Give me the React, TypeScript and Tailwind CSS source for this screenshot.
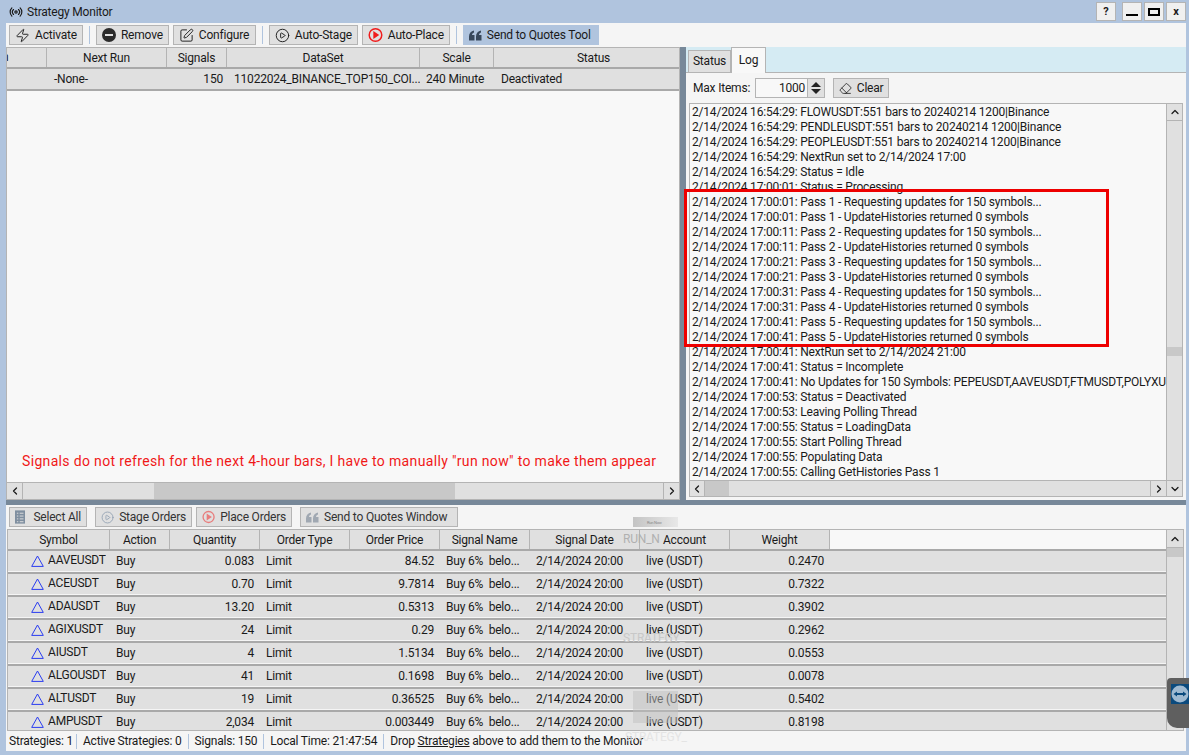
import { ChevronDown, ChevronLeft, ChevronRight, ChevronUp, CirclePlay, Eraser, Radio, SquarePen, Zap } from "lucide-react";
import type { ReactNode } from "react";

const logLines = [
  "2/14/2024 16:54:29: FLOWUSDT:551 bars to 20240214 1200|Binance",
  "2/14/2024 16:54:29: PENDLEUSDT:551 bars to 20240214 1200|Binance",
  "2/14/2024 16:54:29: PEOPLEUSDT:551 bars to 20240214 1200|Binance",
  "2/14/2024 16:54:29: NextRun set to 2/14/2024 17:00",
  "2/14/2024 16:54:29: Status = Idle",
  "2/14/2024 17:00:01: Status = Processing",
  "2/14/2024 17:00:01: Pass 1 - Requesting updates for 150 symbols...",
  "2/14/2024 17:00:01: Pass 1 - UpdateHistories returned 0 symbols",
  "2/14/2024 17:00:11: Pass 2 - Requesting updates for 150 symbols...",
  "2/14/2024 17:00:11: Pass 2 - UpdateHistories returned 0 symbols",
  "2/14/2024 17:00:21: Pass 3 - Requesting updates for 150 symbols...",
  "2/14/2024 17:00:21: Pass 3 - UpdateHistories returned 0 symbols",
  "2/14/2024 17:00:31: Pass 4 - Requesting updates for 150 symbols...",
  "2/14/2024 17:00:31: Pass 4 - UpdateHistories returned 0 symbols",
  "2/14/2024 17:00:41: Pass 5 - Requesting updates for 150 symbols...",
  "2/14/2024 17:00:41: Pass 5 - UpdateHistories returned 0 symbols",
  "2/14/2024 17:00:41: NextRun set to 2/14/2024 21:00",
  "2/14/2024 17:00:41: Status = Incomplete",
  "2/14/2024 17:00:41: No Updates for 150 Symbols: PEPEUSDT,AAVEUSDT,FTMUSDT,POLYXUSDT,ARUSDT",
  "2/14/2024 17:00:53: Status = Deactivated",
  "2/14/2024 17:00:53: Leaving Polling Thread",
  "2/14/2024 17:00:55: Status = LoadingData",
  "2/14/2024 17:00:55: Start Polling Thread",
  "2/14/2024 17:00:55: Populating Data",
  "2/14/2024 17:00:55: Calling GetHistories Pass 1",
];

const orders = [
  ["AAVEUSDT", "0.083", "84.52", "0.2470"],
  ["ACEUSDT", "0.70", "9.7814", "0.7322"],
  ["ADAUSDT", "13.20", "0.5313", "0.3902"],
  ["AGIXUSDT", "24", "0.29", "0.2962"],
  ["AIUSDT", "4", "1.5134", "0.0553"],
  ["ALGOUSDT", "41", "0.1698", "0.0078"],
  ["ALTUSDT", "19", "0.36525", "0.5402"],
  ["AMPUSDT", "2,034", "0.003449", "0.8198"],
];

function Btn({ icon, label, active, dim, className }: { icon: ReactNode; label: string; active?: boolean; dim?: boolean; className?: string }) {
  return (
    <div className={`flex h-[20px] shrink-0 items-center gap-[5px] whitespace-nowrap border px-[5px] ${active ? "border-[#b0c4de] bg-[#b0c4de]" : "border-[#b4b4b4] bg-[#e0e0e0]"} ${dim ? "text-[#333]" : ""} ${className ?? ""}`}>
      {icon}
      <span className="pt-[1px]">{label}</span>
    </div>
  );
}

function Sep() {
  return <div className="mx-[2px] h-[18px] w-[1px] bg-[#b0c4de]" />;
}

function Quote({ color }: { color: string }) {
  return (
    <svg width="13" height="11" viewBox="0 0 13 11" fill={color}>
      <path d="M0 6.5C0 3 2 1 5 .5V2.5C3.800 3 3 3.800 3 5H5.500V10.500H0ZM7 6.500C7 3 9 1 12 .5V2.500C10.800 3 10 3.800 10 5H12.500V10.500H7Z" />
    </svg>
  );
}

function RedPlay({ dim }: { dim?: boolean }) {
  return (
    <svg width="16" height="16" viewBox="0 0 16 16" className={dim ? "opacity-50" : ""}>
      <circle cx="8" cy="8" r="6.700" fill="none" stroke="#f01c1c" strokeWidth="1.600" />
      <path d="M5.700 3.800 12 8 5.700 12.200Z" fill="#f01c1c" />
    </svg>
  );
}

function HeaderCell({ w, label }: { w: string; label: string }) {
  return <div className={`${w} flex h-full shrink-0 items-center justify-center border-r border-[#b4b4b4] pt-[1px]`}>{label}</div>;
}

function ScrollBtn({ children, className }: { children: ReactNode; className: string }) {
  return <div className={`flex shrink-0 items-center justify-center bg-[#e0e0e0] ${className}`}>{children}</div>;
}

function OrderRow({ o }: { o: string[] }) {
  return (
    <div className="flex h-[23px] items-center border-t-2 border-b border-t-[#a9a9a9] border-b-[#f5f5f5] bg-[#e0e0e0] pt-[1px]">
      <div className="flex w-[102px] shrink-0 items-center pl-[23px]">
        <svg width="13" height="12" viewBox="0 0 13 12" className="-mt-[1px] shrink-0">
          <path d="M6.500 1 12.300 11.400H.7Z" fill="none" stroke="#2a3cf0" strokeWidth="1" />
        </svg>
        <span className="ml-[4px] -mt-[2px] w-[58px] shrink-0 overflow-hidden whitespace-nowrap">{o[0]}</span>
      </div>
      <div className="w-[60px] shrink-0 pl-[6px]">Buy</div>
      <div className="w-[90px] shrink-0 pr-[6px] text-right">{o[1]}</div>
      <div className="w-[90px] shrink-0 pl-[6px]">Limit</div>
      <div className="w-[90px] shrink-0 pr-[6px] text-right">{o[2]}</div>
      <div className="w-[90px] shrink-0 whitespace-pre pl-[6px]">Buy 6%  belo...</div>
      <div className="w-[110px] shrink-0 pl-[6px]">2/14/2024 20:00</div>
      <div className="w-[90px] shrink-0 pl-[6px]">live (USDT)</div>
      <div className="w-[100px] shrink-0 pr-[6px] text-right">{o[3]}</div>
    </div>
  );
}

export default function App() {
  return (
    <div className="relative flex h-[755px] w-[1189px] flex-col overflow-hidden bg-[#b0c4de] pb-[4px] pl-[6px] pr-[3px] text-[12px] leading-[15px] tracking-[-0.2px] text-[#1a1a1a] [font-family:Roboto,sans-serif]">
      {/* title bar */}
      <div className="flex h-[23px] shrink-0 items-center">
        <Radio size={14} strokeWidth={2} className="mr-[4px] ml-[3px]" />
        <span className="pt-[1px]">Strategy Monitor</span>
        <div className="ml-auto flex items-center">
          <div className="flex h-[19px] w-[20px] items-center justify-center border border-[#b4b4b4] bg-[#f0f0f0] text-[11px] font-bold">?</div>
          <div className="ml-[6px] flex h-[19px] w-[20px] items-end justify-center border border-[#b4b4b4] bg-[#f0f0f0] pb-[4px]"><div className="h-[2px] w-[12px] bg-black" /></div>
          <div className="ml-[2px] flex h-[19px] w-[20px] items-center justify-center border border-[#b4b4b4] bg-[#f0f0f0]"><div className="h-[8px] w-[12px] border-2 border-black" /></div>
          <div className="ml-[2px] flex h-[19px] w-[20px] items-center justify-center border border-[#b4b4b4] bg-[#f0f0f0] text-[11px] font-bold">x</div>
        </div>
      </div>

      {/* toolbar */}
      <div className="flex h-[24px] shrink-0 items-center gap-[4px] bg-[#f5f5f5] pl-[3px]">
        <Btn icon={<Zap size={15} strokeWidth={1.500} />} label="Activate" />
        <Sep />
        <Btn icon={<svg width="14" height="14" viewBox="0 0 14 14"><circle cx="7" cy="7" r="7" fill="#2b2b2b" /><rect x="3" y="6" width="8" height="2" fill="#e0e0e0" /></svg>} label="Remove" />
        <Btn icon={<SquarePen size={15} strokeWidth={1.500} />} label="Configure" className="w-[83px]" />
        <Sep />
        <Btn icon={<CirclePlay size={15} strokeWidth={1.500} />} label="Auto-Stage" className="w-[89px]" />
        <Btn icon={<RedPlay />} label="Auto-Place" className="w-[88px]" />
        <Sep />
        <Btn icon={<Quote color="#38485c" />} label="Send to Quotes Tool" active className="w-[136px]" />
      </div>

      {/* top panes */}
      <div className="flex h-[453px] shrink-0">
        {/* strategies */}
        <div className="flex w-[674px] shrink-0 flex-col border border-[#b4b4b4] bg-[#f8f8f8]">
          <div className="flex h-[19px] shrink-0 overflow-hidden bg-[#e0e0e0]">
            <div className="flex h-full w-[40px] shrink-0 items-center overflow-hidden border-r border-[#b4b4b4]"><span className="-ml-[5px]">n</span></div>
            <HeaderCell w="w-[120px]" label="Next Run" />
            <HeaderCell w="w-[60px]" label="Signals" />
            <HeaderCell w="w-[193px]" label="DataSet" />
            <HeaderCell w="w-[74px]" label="Scale" />
            <HeaderCell w="w-[200px]" label="Status" />
          </div>
          <div className="flex h-[24px] shrink-0 items-center border-y-2 border-y-[#a9a9a9] bg-[#e0e0e0] pt-[1px]">
            <div className="w-[160px] pl-[47px]">-None-</div>
            <div className="w-[60px] pr-[4px] text-right">150</div>
            <div className="w-[193px] overflow-hidden whitespace-nowrap pl-[7px]">11022024_BINANCE_TOP150_COI...</div>
            <div className="w-[74px] whitespace-nowrap pl-[6px]">240 Minute</div>
            <div className="pl-[7px]">Deactivated</div>
          </div>
          <div className="flex flex-1 items-end pb-[13px] pl-[15px] text-[14px] tracking-[0.34px] text-[#f01818]">
            Signals do not refresh for the next 4-hour bars, I have to manually "run now" to make them appear
          </div>
          <div className="flex h-[17px] shrink-0 border-t border-[#b4b4b4] bg-[#e0e0e0]">
            <ScrollBtn className="w-[16px] border-r border-[#b4b4b4]"><ChevronLeft size={12} strokeWidth={2.500} /></ScrollBtn>
            <div className="ml-[131px] w-[301px] bg-[#c8c8c8]" />
            <ScrollBtn className="ml-auto w-[16px] border-l border-[#b4b4b4]"><ChevronRight size={12} strokeWidth={2.500} /></ScrollBtn>
          </div>
        </div>

        <div className="w-[6px] shrink-0 bg-[#778899]" />

        {/* log pane */}
        <div className="flex w-[500px] shrink-0 flex-col bg-[#d5ebf3]">
          <div className="flex h-[26px] shrink-0 items-end border-b border-[#b4b4b4]">
            <div className="ml-[2px] flex h-[22px] w-[43px] items-center justify-center border border-b-0 border-[#b4b4b4] bg-[#e0e0e0]">Status</div>
            <div className="-mb-[1px] flex h-[26px] w-[35px] items-center justify-center border border-b-0 border-[#b4b4b4] bg-[#f8f8f8]">Log</div>
          </div>
          <div className="flex flex-1 flex-col bg-[#f5f5f5]">
            <div className="flex h-[30px] shrink-0 items-center pl-[7px]">
              <span>Max Items:</span>
              <div className="ml-[5px] flex h-[20px] w-[70px] items-center border border-[#b4b4b4] bg-[#f8f8f8]">
                <span className="flex-1 pr-[2px] text-right">1000</span>
                <div className="flex h-full w-[17px] flex-col items-center justify-center border-l border-[#b4b4b4] bg-[#e0e0e0]">
                  <svg width="10" height="5" viewBox="0 0 10 5"><path d="M5 0 10 5H0Z" fill="#222" /></svg>
                  <svg width="10" height="5" viewBox="0 0 10 5" className="mt-[2px]"><path d="M5 5 0 0H10Z" fill="#222" /></svg>
                </div>
              </div>
              <div className="ml-[8px] flex h-[20px] w-[56px] items-center justify-center gap-[5px] border border-[#b4b4b4] bg-[#e0e0e0]">
                <Eraser size={13} strokeWidth={1.500} />
                <span>Clear</span>
              </div>
            </div>
            <div className="relative ml-[3px] mr-[3px] flex min-h-0 flex-1 flex-col border border-[#b4b4b4] bg-[#f8f8f8]">
              <div className="flex min-h-0 flex-1">
                <div className="min-w-0 flex-1 overflow-hidden whitespace-nowrap pl-[2px] pt-[1px]">
                  {logLines.map((line, i) => (
                    <div key={i} className="h-[15px]">{line}</div>
                  ))}
                </div>
                <div className="flex w-[16px] shrink-0 flex-col border-l border-[#b4b4b4] bg-[#e0e0e0]">
                  <ScrollBtn className="h-[17px] border-b border-[#b4b4b4]"><ChevronUp size={12} strokeWidth={2.500} /></ScrollBtn>
                  <div className="mt-[226px] h-[9px] bg-[#c8c8c8]" />
                </div>
              </div>
              <div className="flex h-[16px] shrink-0 border-t border-[#b4b4b4] bg-[#e0e0e0]">
                <ScrollBtn className="w-[15px] border-r border-[#b4b4b4]"><ChevronLeft size={12} strokeWidth={2.500} /></ScrollBtn>
                <div className="w-[24px] bg-[#c8c8c8]" />
                <ScrollBtn className="ml-auto w-[16px] border-l border-[#b4b4b4]"><ChevronRight size={12} strokeWidth={2.500} /></ScrollBtn>
                <ScrollBtn className="w-[16px] border-l border-[#b4b4b4]"><ChevronDown size={12} strokeWidth={2.500} /></ScrollBtn>
              </div>
              <div className="absolute left-[-6px] top-[85px] h-[158px] w-[425px] border-[3px] border-[#ee0000]" />
            </div>
            <div className="h-[4px] shrink-0" />
          </div>
        </div>
      </div>

      <div className="h-[5px] shrink-0 bg-[#778899]" />

      {/* orders */}
      <div className="flex min-h-0 flex-1 flex-col bg-[#f5f5f5]">
        <div className="flex h-[24px] shrink-0 items-center pl-[3px]">
          <Btn
            dim
            icon={
              <svg width="11" height="14" viewBox="0 0 11 14">
                <rect width="11" height="14" fill="#7f8fa0" />
                <path d="M2 3H3.500M5 3H9M2 6H3.500M5 6H9M2 9H3.500M5 9H9M2 12H3.500M5 12H9" stroke="#e0e0e0" strokeWidth="1" />
              </svg>
            }
            label="Select All"
            className="w-[78px] gap-[8px]"
          />
          <Btn dim icon={<CirclePlay size={15} strokeWidth={1.500} className="text-[#8d9db0]" />} label="Stage Orders" className="ml-[8px] w-[97px] gap-[3px] px-[4px]" />
          <Btn dim icon={<RedPlay dim />} label="Place Orders" className="ml-[4px] w-[96px] gap-[3px] px-[4px]" />
          <Btn dim icon={<Quote color="#a0a8b2" />} label="Send to Quotes Window" className="ml-[8px] w-[158px]" />
        </div>
        <div className="ml-[1px] mr-[2px] flex min-h-0 flex-1 border border-[#b4b4b4] bg-[#f8f8f8]">
          <div className="min-w-0 flex-1 overflow-hidden">
            <div className="flex h-[19px] w-[822px] bg-[#e0e0e0]">
              <HeaderCell w="w-[102px]" label="Symbol" />
              <HeaderCell w="w-[60px]" label="Action" />
              <HeaderCell w="w-[90px]" label="Quantity" />
              <HeaderCell w="w-[90px]" label="Order Type" />
              <HeaderCell w="w-[90px]" label="Order Price" />
              <HeaderCell w="w-[90px]" label="Signal Name" />
              <HeaderCell w="w-[110px]" label="Signal Date" />
              <HeaderCell w="w-[90px]" label="Account" />
              <HeaderCell w="w-[100px]" label="Weight" />
            </div>
            {orders.map((o) => (
              <OrderRow key={o[0]} o={o} />
            ))}
          </div>
          <div className="flex w-[17px] shrink-0 flex-col border-l border-[#b4b4b4] bg-[#e0e0e0]">
            <ScrollBtn className="h-[18px] border-b border-[#b4b4b4]"><ChevronUp size={12} strokeWidth={2.500} /></ScrollBtn>
            <div className="h-[9px] bg-[#c8c8c8]" />
          </div>
        </div>
      </div>

      {/* status bar */}
      <div className="flex h-[20px] shrink-0 items-center bg-[#f5f5f5] pt-[1px]">
        <div className="border-r border-[#b0c4de] px-[3px]">Strategies: 1</div>
        <div className="border-r border-[#b0c4de] px-[6px]">Active Strategies: 0</div>
        <div className="border-r border-[#b0c4de] px-[6px]">Signals: 150</div>
        <div className="border-r border-[#b0c4de] px-[6px]">Local Time: 21:47:54</div>
        <div className="px-[6px]">Drop <span className="underline">Strategies</span> above to add them to the Monitor</div>
      </div>

      {/* drag ghosts left on screen */}
      <div className="absolute left-[633px] top-[517px] flex h-[10px] w-[45px] items-center bg-gradient-to-r from-[#c4c4c4] to-[#e8e8e8] pl-[14px] text-[4px] text-[#888]">Run Now</div>
      <div className="absolute left-[623px] top-[532px] text-[#b0b0b0]">RUN_N</div>
      <div className="absolute left-[623px] top-[631px] text-[#c8c8c8]">STRATEGY_</div>
      <div className="absolute left-[633px] top-[691px] h-[32px] w-[45px] bg-[#c0c0c0]/50" />
      <div className="absolute left-[625px] top-[730px] text-[#e4e4e4]">STRATEGY_</div>

      {/* remote-control widget */}
      <div className="absolute left-[1167px] top-[678px] h-[50px] w-[22px] rounded-tl-[4px] rounded-bl-[10px] bg-[#5f5f5f]">
        <div className="ml-[4px] mt-[6px] flex h-[20px] w-[18px] items-center justify-center bg-[#0b4a7d]">
          <svg width="18" height="18" viewBox="0 0 18 18">
            <circle cx="9" cy="9" r="8.500" fill="#9fb9d0" />
            <path d="M2.500 9 6 6.500V8H12V6.500L15.500 9 12 11.500V10H6V11.500Z" fill="#0b4a7d" />
          </svg>
        </div>
      </div>
    </div>
  );
}
